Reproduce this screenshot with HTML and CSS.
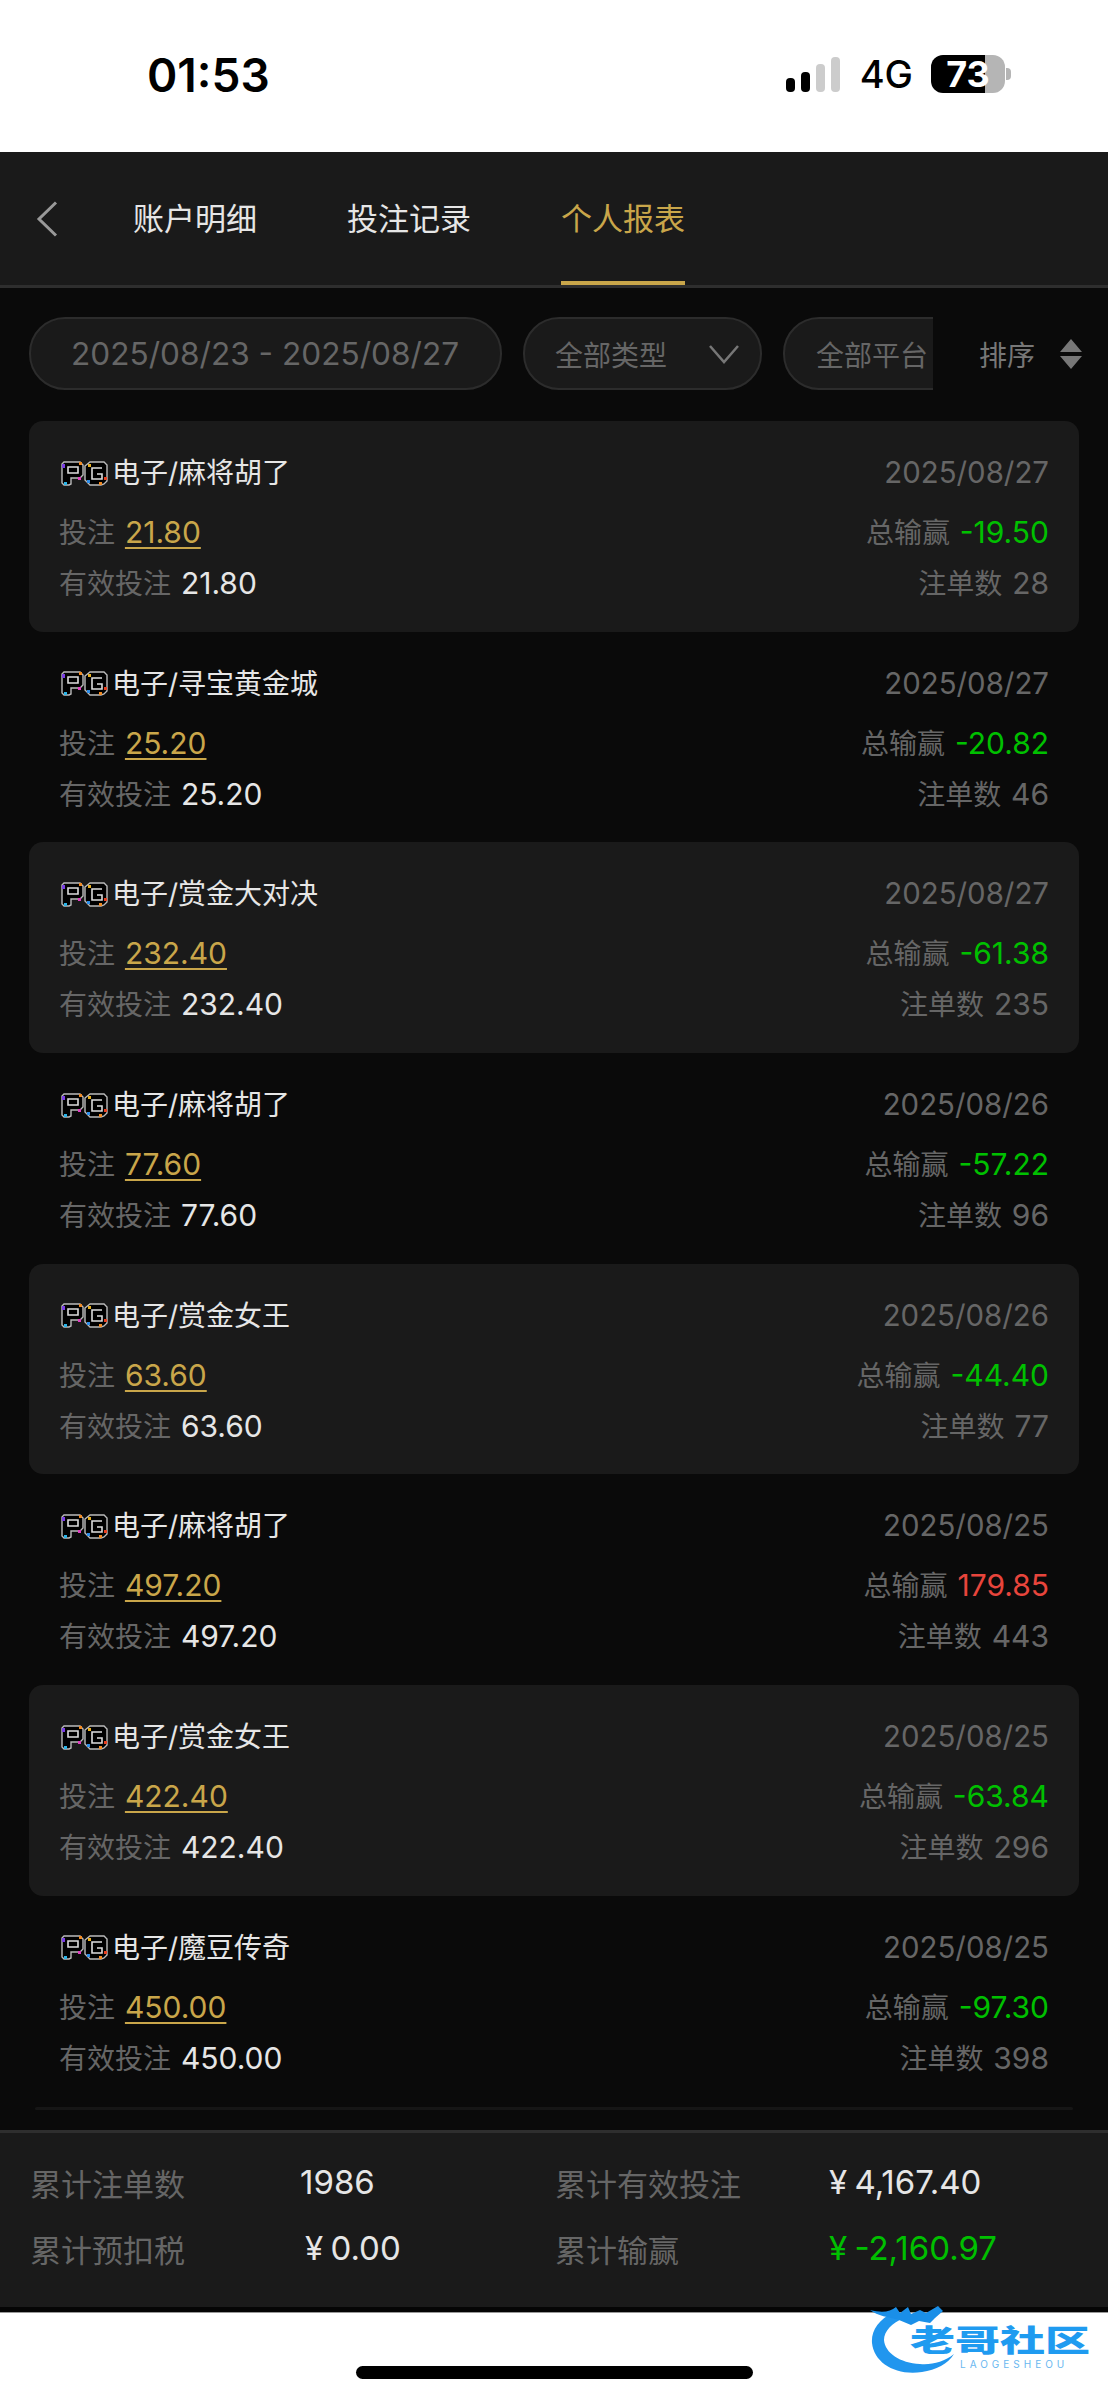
FILE: index.html
```html
<!DOCTYPE html>
<html lang="zh">
<head>
    <meta charset="UTF-8">
    <meta name="viewport" content="width=device-width, initial-scale=1.0">
    <title>个人报表</title>
    <link rel="stylesheet" href="styles.css">
</head>
<body>
<svg class="defs" width="0" height="0">
    <symbol id="pg-logo" viewBox="0 0 48 25">
        <path d="M3 1h16l3 3v10l-3 3H10v6l-2 1H3l-2-2V3z" fill="#000" stroke="#bbb" stroke-width="1.4"/>
        <path d="M7 6h10v6H7z" fill="none" stroke="#ddd" stroke-width="1.6"/>
        <path d="M29 1h14l3 3v16l-3 3-3 1H29l-3-3-2-2V5z" fill="#000" stroke="#bbb" stroke-width="1.4"/>
        <path d="M41 7H31v11h10v-5h-5" fill="none" stroke="#ddd" stroke-width="1.6"/>
        <rect x="1" y="3" width="3" height="4" fill="#7b3fe4"/>
        <rect x="3" y="21" width="3" height="3" fill="#2bb4e8"/>
        <rect x="17" y="16" width="3" height="3" fill="#e03fc0"/>
        <rect x="18" y="1" width="3" height="3" fill="#f08a24"/>
        <rect x="27" y="3" width="3" height="3" fill="#e8b020"/>
        <rect x="26" y="19" width="3" height="3" fill="#2b8ce8"/>
        <rect x="43" y="16" width="3" height="3" fill="#e84020"/>
        <rect x="38" y="21" width="3" height="3" fill="#f08a24"/>
    </symbol>
</svg>

<div class="status-bar">
    <span class="clock">01:53</span>
    <div class="status-icons">
        <div class="signal">
            <i class="bar-1"></i><i class="bar-2"></i><i class="bar-3"></i><i class="bar-4"></i>
        </div>
        <span class="network">4G</span>
        <div class="battery">73</div>
        <div class="battery-tip"></div>
    </div>
</div>

<div class="navbar">
    <svg class="back" width="22" height="36" viewBox="0 0 22 36"><path d="M20 1.5 3 18l17 16.5" fill="none" stroke="#999" stroke-width="3"/></svg>
    <a href="#" class="tab">账户明细</a>
    <a href="#" class="tab">投注记录</a>
    <a href="#" class="tab active">个人报表</a>
</div>

<div class="content">
    <div class="filters">
        <div class="filter-list">
            <div class="pill pill-date">2025/08/23 - 2025/08/27</div>
            <div class="pill pill-type">全部类型
                <svg width="32" height="20" viewBox="0 0 32 20"><path d="M2 2l14 16L30 2" fill="none" stroke="#777" stroke-width="2.5"/></svg>
            </div>
            <div class="pill pill-platform">全部平台</div>
        </div>
        <div class="sort">排序
            <svg width="22" height="30" viewBox="0 0 22 30"><path d="M11 0l11 13H0zM0 17h22L11 30z" fill="#777"/></svg>
        </div>
    </div>

    <ul class="records">
        <li class="record">
            <div class="line line-title">
                <span class="game"><svg class="pg" width="48" height="25"><use href="#pg-logo"/></svg>电子/麻将胡了</span>
                <span class="muted date">2025/08/27</span>
            </div>
            <div class="line">
                <span class="muted">投注 <a href="#" class="num bet">21.80</a></span>
                <span class="muted">总输赢 <span class="num loss">-19.50</span></span>
            </div>
            <div class="line">
                <span class="muted">有效投注 <span class="num value">21.80</span></span>
                <span class="muted">注单数 <span class="num">28</span></span>
            </div>
        </li>
        <li class="record">
            <div class="line line-title">
                <span class="game"><svg class="pg" width="48" height="25"><use href="#pg-logo"/></svg>电子/寻宝黄金城</span>
                <span class="muted date">2025/08/27</span>
            </div>
            <div class="line">
                <span class="muted">投注 <a href="#" class="num bet">25.20</a></span>
                <span class="muted">总输赢 <span class="num loss">-20.82</span></span>
            </div>
            <div class="line">
                <span class="muted">有效投注 <span class="num value">25.20</span></span>
                <span class="muted">注单数 <span class="num">46</span></span>
            </div>
        </li>
        <li class="record">
            <div class="line line-title">
                <span class="game"><svg class="pg" width="48" height="25"><use href="#pg-logo"/></svg>电子/赏金大对决</span>
                <span class="muted date">2025/08/27</span>
            </div>
            <div class="line">
                <span class="muted">投注 <a href="#" class="num bet">232.40</a></span>
                <span class="muted">总输赢 <span class="num loss">-61.38</span></span>
            </div>
            <div class="line">
                <span class="muted">有效投注 <span class="num value">232.40</span></span>
                <span class="muted">注单数 <span class="num">235</span></span>
            </div>
        </li>
        <li class="record">
            <div class="line line-title">
                <span class="game"><svg class="pg" width="48" height="25"><use href="#pg-logo"/></svg>电子/麻将胡了</span>
                <span class="muted date">2025/08/26</span>
            </div>
            <div class="line">
                <span class="muted">投注 <a href="#" class="num bet">77.60</a></span>
                <span class="muted">总输赢 <span class="num loss">-57.22</span></span>
            </div>
            <div class="line">
                <span class="muted">有效投注 <span class="num value">77.60</span></span>
                <span class="muted">注单数 <span class="num">96</span></span>
            </div>
        </li>
        <li class="record">
            <div class="line line-title">
                <span class="game"><svg class="pg" width="48" height="25"><use href="#pg-logo"/></svg>电子/赏金女王</span>
                <span class="muted date">2025/08/26</span>
            </div>
            <div class="line">
                <span class="muted">投注 <a href="#" class="num bet">63.60</a></span>
                <span class="muted">总输赢 <span class="num loss">-44.40</span></span>
            </div>
            <div class="line">
                <span class="muted">有效投注 <span class="num value">63.60</span></span>
                <span class="muted">注单数 <span class="num">77</span></span>
            </div>
        </li>
        <li class="record">
            <div class="line line-title">
                <span class="game"><svg class="pg" width="48" height="25"><use href="#pg-logo"/></svg>电子/麻将胡了</span>
                <span class="muted date">2025/08/25</span>
            </div>
            <div class="line">
                <span class="muted">投注 <a href="#" class="num bet">497.20</a></span>
                <span class="muted">总输赢 <span class="num win">179.85</span></span>
            </div>
            <div class="line">
                <span class="muted">有效投注 <span class="num value">497.20</span></span>
                <span class="muted">注单数 <span class="num">443</span></span>
            </div>
        </li>
        <li class="record">
            <div class="line line-title">
                <span class="game"><svg class="pg" width="48" height="25"><use href="#pg-logo"/></svg>电子/赏金女王</span>
                <span class="muted date">2025/08/25</span>
            </div>
            <div class="line">
                <span class="muted">投注 <a href="#" class="num bet">422.40</a></span>
                <span class="muted">总输赢 <span class="num loss">-63.84</span></span>
            </div>
            <div class="line">
                <span class="muted">有效投注 <span class="num value">422.40</span></span>
                <span class="muted">注单数 <span class="num">296</span></span>
            </div>
        </li>
        <li class="record">
            <div class="line line-title">
                <span class="game"><svg class="pg" width="48" height="25"><use href="#pg-logo"/></svg>电子/魔豆传奇</span>
                <span class="muted date">2025/08/25</span>
            </div>
            <div class="line">
                <span class="muted">投注 <a href="#" class="num bet">450.00</a></span>
                <span class="muted">总输赢 <span class="num loss">-97.30</span></span>
            </div>
            <div class="line">
                <span class="muted">有效投注 <span class="num value">450.00</span></span>
                <span class="muted">注单数 <span class="num">398</span></span>
            </div>
        </li>
    </ul>
    <div class="list-end"></div>
</div>

<div class="summary">
    <span class="muted">累计注单数</span>
    <span class="amount value">1986</span>
    <span class="muted">累计有效投注</span>
    <span class="amount value">¥ 4,167.40</span>
    <span class="muted">累计预扣税</span>
    <span class="amount value tax">¥ 0.00</span>
    <span class="muted">累计输赢</span>
    <span class="amount loss">¥ -2,160.97</span>
</div>

<div class="home-area">
    <div class="home-bar"></div>
</div>

<div class="watermark">
    <svg width="90" height="72" viewBox="0 0 90 72">
        <path d="M24 9C8 17 1 28 2 40c2 20 24 33 50 29 14-2 26-8 32-18-10 8-22 11-34 10C30 60 15 50 14 37c0-9 8-17 20-22z" fill="#2196ee"/>
        <path d="M0 7c12 3 20 2 26-3l4 6 8-6 3 7 9-4 6 3 12-7 5 5-8 7-5 5-11-2-8 4-12-5C18 14 8 13 0 7z" fill="#1a8fe8"/>
    </svg>
    <div class="wm-name">老哥社区</div>
    <div class="wm-sub">LAOGESHEOU</div>
</div>
</body>
</html>
```

FILE: styles.css
```css
body {
    font-family: Inter, "Noto Sans CJK SC", sans-serif;
    margin: 0;
    padding: 0;
    width: 1108px;
    height: 2400px;
    position: relative;
    overflow: hidden;
    display: flex;
    flex-direction: column;
    background-color: #0a0a0a;
    font-size: 28px;
    color: #e6e6e6;
}

.defs {
    position: absolute;
}

a {
    color: inherit;
}

/* status bar */
.status-bar {
    height: 152px;
    flex: none;
    box-sizing: border-box;
    background-color: white;
    color: black;
    display: flex;
    justify-content: space-between;
    align-items: flex-start;
    padding: 48px 97px 0 147px;
}

.clock {
    font-size: 46px;
    font-weight: 600;
    line-height: 54px;
}

.status-icons {
    display: flex;
    align-items: center;
    margin-top: 7px;
}

.signal {
    display: flex;
    align-items: flex-end;
    gap: 6px;
    height: 35px;
}

.signal i {
    display: block;
    width: 9px;
    border-radius: 4px;
    background-color: black;
}

.signal .bar-1 { height: 14px; }
.signal .bar-2 { height: 20px; }
.signal .bar-3 { height: 28px; background-color: #ccc; }
.signal .bar-4 { height: 35px; background-color: #ccc; }

.network {
    font-size: 38px;
    font-weight: 500;
    line-height: 38px;
    margin: 0 18px 0 20px;
}

.battery {
    width: 74px;
    height: 38px;
    border-radius: 12px;
    background: linear-gradient(90deg, black 73%, #b5b5b5 73%);
    color: white;
    font-size: 36px;
    font-weight: 700;
    line-height: 38px;
    text-align: center;
}

.battery-tip {
    width: 5px;
    height: 12px;
    margin-left: 1px;
    border-radius: 0 4px 4px 0;
    background-color: #b5b5b5;
}

/* tabs */
.navbar {
    height: 136px;
    flex: none;
    box-sizing: border-box;
    display: flex;
    background-color: #1a1a1a;
    border-bottom: 3px solid #2e2e2e;
    padding-left: 36px;
}

.back {
    margin: 49px 75px 0 0;
}

.tab {
    box-sizing: border-box;
    height: 133px;
    margin-right: 90px;
    font-size: 31px;
    line-height: 134px;
    text-decoration: none;
    color: #e6e6e6;
}

.tab.active {
    color: #c9a64a;
    border-bottom: 4px solid #c9a64a;
}

/* filters */
.content {
    height: 1842px;
    flex: none;
    padding: 0 29px;
}

.filters {
    height: 133px;
    box-sizing: border-box;
    padding-top: 29px;
    display: flex;
    align-items: flex-start;
}

.filter-list {
    width: 904px;
    flex: none;
    display: flex;
    gap: 21px;
    overflow: hidden;
}

.pill {
    box-sizing: border-box;
    height: 73px;
    flex: none;
    display: flex;
    align-items: center;
    justify-content: space-between;
    background-color: #1a1a1a;
    border: 2px solid #2c2c2c;
    border-radius: 36px;
    color: #666;
    white-space: nowrap;
}

.pill-date {
    width: 473px;
    padding: 0 40px;
    font-size: 31.6px;
}

.pill-type {
    width: 239px;
    padding: 0 20px 0 30px;
}

.pill-platform {
    width: 239px;
    padding: 0 31px;
}

.sort {
    margin-left: 46px;
    height: 73px;
    display: flex;
    align-items: center;
    gap: 25px;
    color: #777;
    white-space: nowrap;
}

/* records */
.records {
    list-style: none;
    margin: 0;
    padding: 0;
}

.record {
    height: 210.7px;
    box-sizing: border-box;
    padding: 30px 30px 0;
    border-radius: 14px;
}

.record:nth-child(odd) {
    background-color: #1a1a1a;
}

.line {
    display: flex;
    justify-content: space-between;
    height: 51px;
    line-height: 51px;
}

.line-title {
    height: 44px;
    line-height: 44px;
    margin-bottom: 12px;
}

.game {
    display: flex;
    align-items: center;
}

.pg {
    margin: 0 3px 0 2px;
}

.muted {
    color: #666;
    word-spacing: 2px;
}

.date {
    font-size: 29.4px;
}

.num {
    font-size: 30px;
}

.value {
    color: #e6e6e6;
}

.bet {
    color: #c9a64a;
    text-decoration-thickness: 2px;
    text-underline-offset: 4px;
}

.loss {
    color: #00c000;
}

.win {
    color: #e8453c;
}

.list-end {
    height: 3px;
    margin: 0 6px;
    border-radius: 3px;
    background-color: #161616;
}

/* totals */
.summary {
    height: 182px;
    flex: none;
    box-sizing: border-box;
    display: grid;
    grid-template-columns: 270px 255px 274px 1fr;
    grid-auto-rows: 66px;
    align-items: center;
    padding: 16px 0 0 30px;
    background-color: #1a1a1a;
    border-top: 3px solid #2e2e2e;
    border-bottom: 5px solid #050505;
    font-size: 31px;
}

.amount {
    font-size: 33px;
    word-spacing: -2px;
}

.tax {
    padding-left: 5px;
}

/* bottom strip */
.home-area {
    flex: 1;
    display: flex;
    justify-content: center;
    background-color: white;
    border-top: 1px solid #999;
}

.home-bar {
    width: 397px;
    height: 13px;
    margin-top: 53px;
    border-radius: 7px;
    background-color: black;
}

.watermark {
    position: absolute;
    left: 870px;
    top: 2303px;
    width: 224px;
    height: 72px;
}

.watermark svg {
    display: block;
}

.wm-name {
    position: absolute;
    left: 40px;
    top: 21px;
    font-size: 30px;
    font-weight: 900;
    line-height: 32px;
    color: #1f9bf0;
    white-space: nowrap;
    transform: scaleX(1.5);
    transform-origin: left center;
}

.wm-sub {
    position: absolute;
    left: 90px;
    top: 55px;
    font-size: 10px;
    line-height: 12px;
    letter-spacing: 4px;
    color: #6ab8f0;
    white-space: nowrap;
}
```
